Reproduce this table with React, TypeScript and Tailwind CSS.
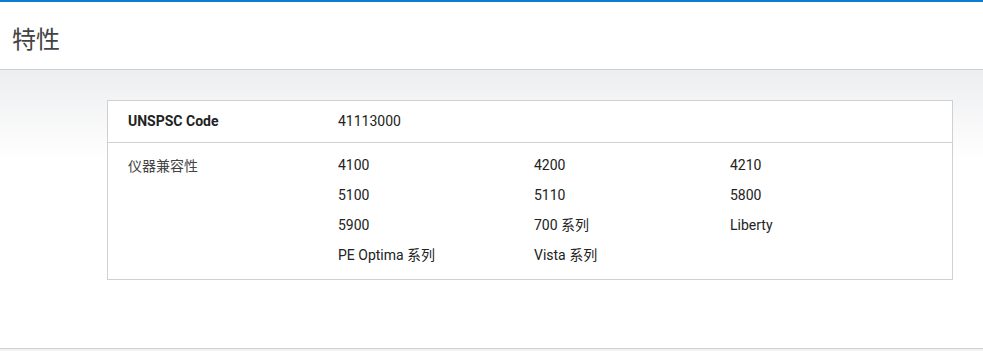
import React from "react";

const values = [
  "4100", "4200", "4210",
  "5100", "5110", "5800",
  "5900", "700 系列", "Liberty",
  "PE Optima 系列", "Vista 系列",
];

export default function App() {
  return (
    <div
      className="w-[983px] h-[351px] bg-white overflow-hidden flex flex-col"
      style={{ fontFamily: "Roboto, 'Noto Sans CJK SC', sans-serif" }}
    >
      <div className="h-[2px] bg-[#0a7fd0]" />
      <div className="h-[68px] border-b border-[#d0d0d0] flex items-start">
        <h1
          className="ml-[12px] mt-[18px] text-[24px] leading-[36px] text-[#444444] font-normal"
          style={{ fontFamily: "'Noto Sans CJK SC', sans-serif" }}
        >
          特性
        </h1>
      </div>
      <div className="h-[278px] bg-gradient-to-b from-[#edeef0] to-white to-[90px] pt-[30px]">
        <div className="ml-[107px] w-[846px] border border-[#d0d0d0] bg-white text-[14px] text-[#222222]">
          <div className="flex h-[42px] items-center border-b border-[#d0d0d0]">
            <div className="w-[230px] pl-[20px] font-bold text-[#222222]">UNSPSC Code</div>
            <div>41113000</div>
          </div>
          <div className="flex pt-[12px] pb-[14px]">
            <div
              className="w-[230px] pl-[20px] leading-[20px] text-[#444444]"
              style={{ fontFamily: "'Noto Sans CJK SC', sans-serif" }}
            >
              仪器兼容性
            </div>
            <div className="grid grid-cols-[196px_196px_196px] gap-y-[10px]">
              {values.map((v) => (
                <div key={v} className="leading-[20px]">
                  {v}
                </div>
              ))}
            </div>
          </div>
        </div>
      </div>
      <div className="h-[1px] bg-[#d0d0d0]" />
      <div className="flex-1 bg-[#f2f2f2]" />
    </div>
  );
}
